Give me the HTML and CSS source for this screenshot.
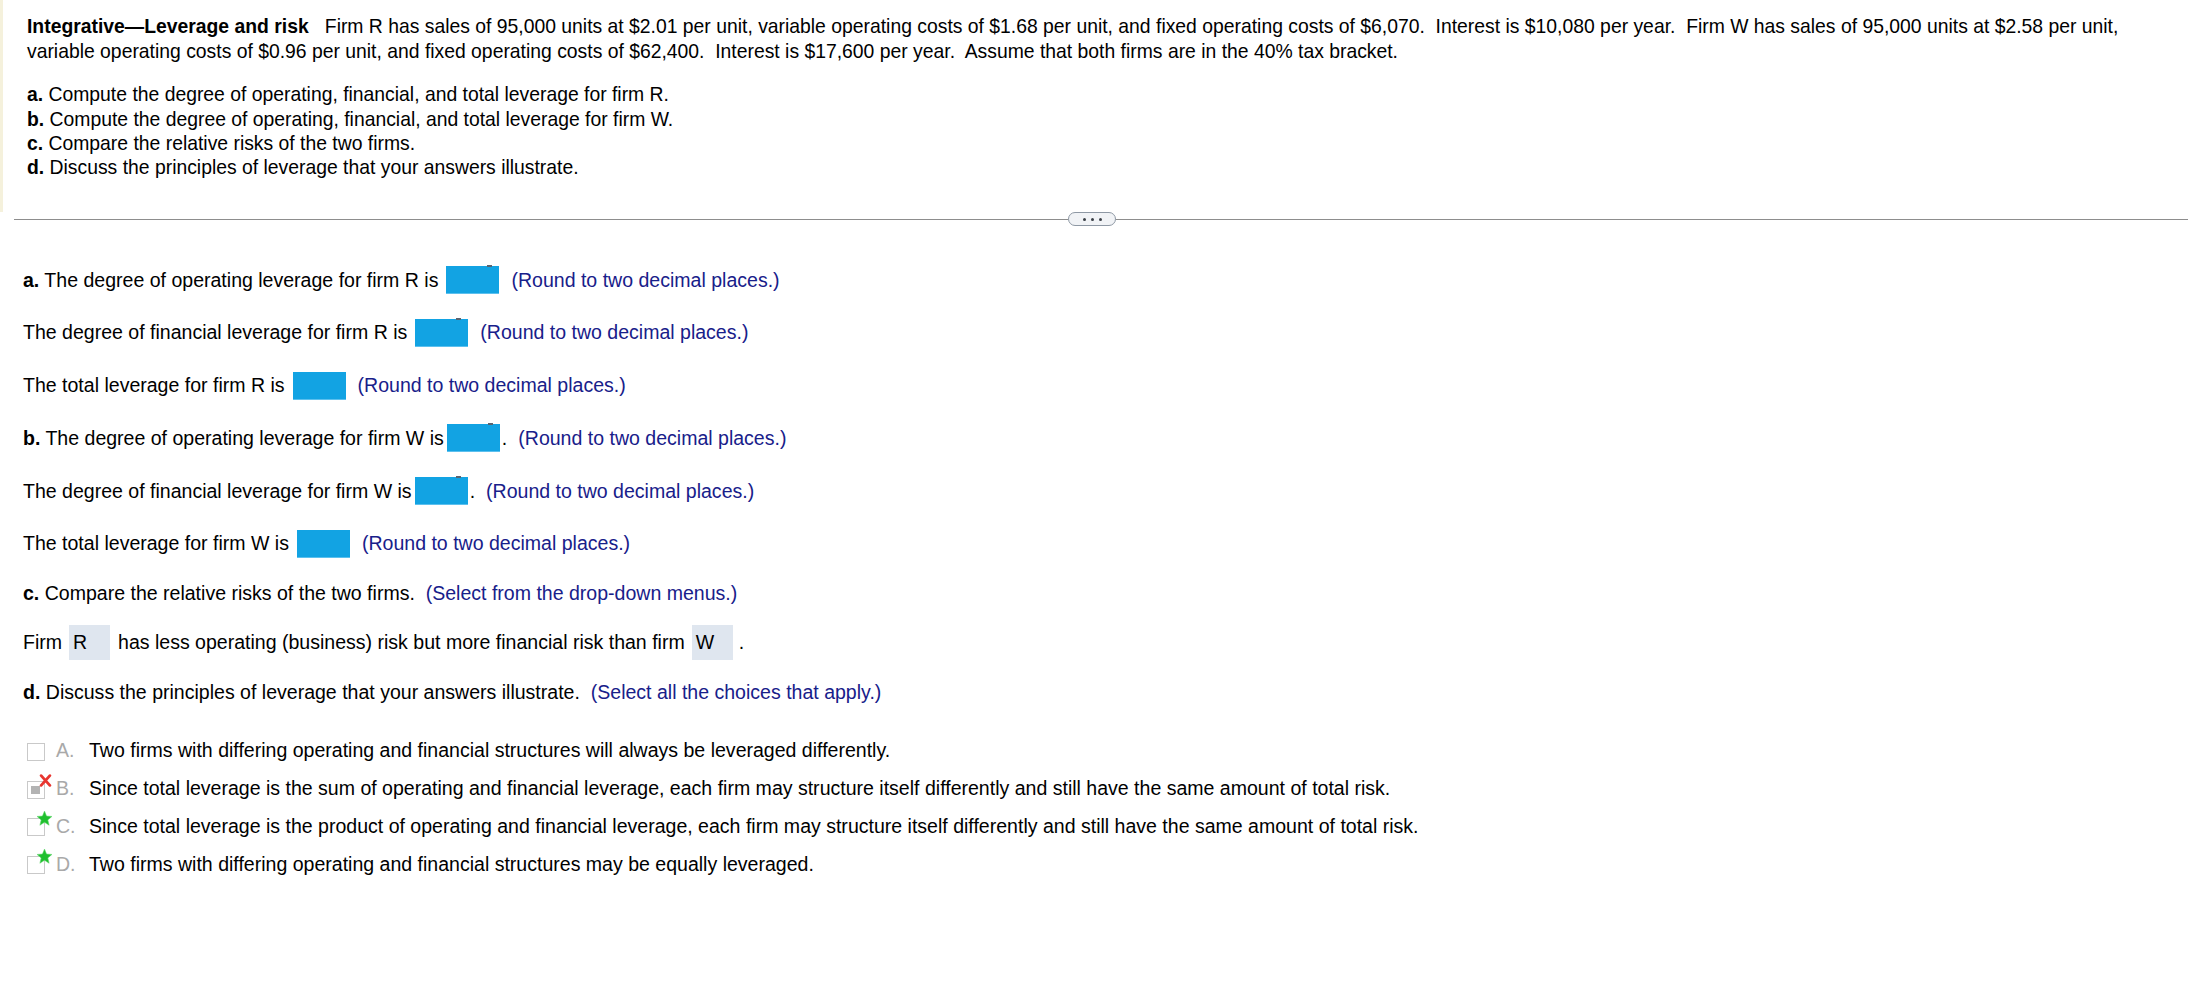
FILE: index.html
```html
<!DOCTYPE html>
<html>
<head>
<meta charset="utf-8">
<link rel="stylesheet" href="styles.css">
</head>
<body>
<div class="page">
  <div class="question">
    <p class="intro"><b>Integrative—Leverage and risk</b>&nbsp;&nbsp; Firm R has sales of 95,000 units at $2.01 per unit, variable operating costs of $1.68 per unit, and fixed operating costs of $6,070.&nbsp; Interest is $10,080 per year.&nbsp; Firm W has sales of 95,000 units at $2.58 per unit,<br>variable operating costs of $0.96 per unit, and fixed operating costs of $62,400.&nbsp; Interest is $17,600 per year.&nbsp; Assume that both firms are in the 40% tax bracket.</p>
    <ul class="parts">
      <li><b>a.</b> Compute the degree of operating, financial, and total leverage for firm R.</li>
      <li><b>b.</b> Compute the degree of operating, financial, and total leverage for firm W.</li>
      <li><b>c.</b> Compare the relative risks of the two firms.</li>
      <li><b>d.</b> Discuss the principles of leverage that your answers illustrate.</li>
    </ul>
  </div>
  <div class="divider">
    <span class="rule"></span>
    <span class="pill"><i></i><i></i><i></i></span>
    <span class="rule"></span>
  </div>
  <div class="answer">
    <div class="row"><span><b>a.</b> The degree of operating leverage for firm R is</span><span class="blank gap8"></span><span class="hint">(Round to two decimal places.)</span></div>
    <div class="row"><span>The degree of financial leverage for firm R is</span><span class="blank gap8"></span><span class="hint">(Round to two decimal places.)</span></div>
    <div class="row"><span>The total leverage for firm R is</span><span class="blank gap8 plain"></span><span class="hint">(Round to two decimal places.)</span></div>
    <div class="row"><span><b>b.</b> The degree of operating leverage for firm W is</span><span class="blank gap2"></span><span class="dot">.</span><span class="hint near">(Round to two decimal places.)</span></div>
    <div class="row"><span>The degree of financial leverage for firm W is</span><span class="blank gap2"></span><span class="dot">.</span><span class="hint near">(Round to two decimal places.)</span></div>
    <div class="row"><span>The total leverage for firm W is</span><span class="blank gap8 plain"></span><span class="hint">(Round to two decimal places.)</span></div>

    <p class="line c-line"><b>c.</b> Compare the relative risks of the two firms.&nbsp; <span class="blue">(Select from the drop-down menus.)</span></p>
    <div class="firm-row"><span>Firm</span><span class="drop">R</span><span>has less operating (business) risk but more financial risk than firm</span><span class="drop">W</span><span class="end">.</span></div>
    <p class="line d-line"><b>d.</b> Discuss the principles of leverage that your answers illustrate.&nbsp; <span class="blue">(Select all the choices that apply.)</span></p>

    <ul class="choices">
      <li class="choice"><span class="box"></span><span class="letter">A.</span><span>Two firms with differing operating and financial structures will always be leveraged differently.</span></li>
      <li class="choice"><span class="box checked"><svg class="mark" viewBox="0 0 12 12" width="13" height="13"><path d="M2 1.5 L10 10.5 M10 1.5 L2 10.5" stroke="#e8352f" stroke-width="2.6" stroke-linecap="round"/></svg></span><span class="letter">B.</span><span>Since total leverage is the sum of operating and financial leverage, each firm may structure itself differently and still have the same amount of total risk.</span></li>
      <li class="choice"><span class="box starred"><svg class="mark star" viewBox="0 0 24 24" width="17" height="17"><path d="M12 1.5 L14.9 8.6 L22.5 9.1 L16.7 14 L18.5 21.5 L12 17.4 L5.5 21.5 L7.3 14 L1.5 9.1 L9.1 8.6 Z" fill="#1fbf2e" stroke="#5fd86a" stroke-width="0.8"/></svg></span><span class="letter">C.</span><span>Since total leverage is the product of operating and financial leverage, each firm may structure itself differently and still have the same amount of total risk.</span></li>
      <li class="choice"><span class="box starred"><svg class="mark star" viewBox="0 0 24 24" width="17" height="17"><path d="M12 1.5 L14.9 8.6 L22.5 9.1 L16.7 14 L18.5 21.5 L12 17.4 L5.5 21.5 L7.3 14 L1.5 9.1 L9.1 8.6 Z" fill="#1fbf2e" stroke="#5fd86a" stroke-width="0.8"/></svg></span><span class="letter">D.</span><span>Two firms with differing operating and financial structures may be equally leveraged.</span></li>
    </ul>
  </div>
</div>
</body>
</html>
```

FILE: styles.css
```css
* { box-sizing: border-box; }
html, body { margin: 0; padding: 0; background: #fff; }
body {
  font-family: "Liberation Sans", Arial, sans-serif;
  font-size: 19.35px;
  color: #000;
}
.page { width: 2188px; }

.question {
  height: 212px;
  border-left: 3px solid #f5f1dc;
  padding: 14px 0 0 24px;
}
.intro {
  margin: 0;
  line-height: 25px;
  white-space: nowrap;
}
.parts {
  list-style: none;
  margin: 18.3px 0 0 0;
  padding: 0;
  line-height: 24.2px;
}

.divider {
  display: flex;
  align-items: center;
  height: 14px;
  margin-left: 14px;
}
.rule { height: 1px; background: #8d8d8d; }
.rule:first-child { width: 1054px; }
.rule:last-child { flex: 1; }
.pill {
  width: 48px;
  height: 14px;
  border: 1px solid #8e98a4;
  border-radius: 7px;
  background: #f1f3f6;
  display: flex;
  align-items: center;
  justify-content: center;
  gap: 5px;
}
.pill i {
  width: 3px;
  height: 3px;
  background: #3a3f46;
  border-radius: 50%;
}

.answer { padding: 40px 0 0 23px; font-size: 19.55px; }
.row {
  display: flex;
  align-items: center;
  height: 28px;
  margin-bottom: 24.8px;
  white-space: nowrap;
}
.blank {
  position: relative;
  width: 53px;
  height: 28px;
  background: #12a3e3;
  border-bottom: 1px solid #5cc0ee;
}
.blank::after {
  content: "";
  position: absolute;
  top: -1px;
  right: 7px;
  width: 5px;
  height: 2px;
  background: #5a6470;
}
.blank.plain::after { display: none; }
.gap8 { margin-left: 8px; }
.gap2 { margin-left: 3px; }
.hint { color: #18208a; margin-left: 12px; }
.dot { margin-left: 2px; }
.hint.near { margin-left: 11px; }

.line { margin: 0; line-height: 24px; white-space: nowrap; }
.blue { color: #18208a; }
.c-line { margin-top: -2px; }
.firm-row {
  display: flex;
  align-items: center;
  height: 35px;
  margin-top: 20.5px;
  white-space: nowrap;
}
.drop {
  width: 41px;
  height: 35px;
  background: #dfe6ef;
  padding-left: 4px;
  display: flex;
  align-items: center;
  margin: 0 8px 0 7px;
}
.drop + span.end { margin-left: -2px; }
.d-line { margin-top: 20px; }

.choices {
  list-style: none;
  margin: 34.5px 0 0 4px;
  padding: 0;
}
.choice {
  display: flex;
  align-items: center;
  height: 24px;
  margin-bottom: 13.8px;
  white-space: nowrap;
}
.box {
  position: relative;
  width: 18px;
  height: 18px;
  border: 1px solid #c9c9c9;
  background: #fff;
  margin-top: 2px;
}
.box.checked::before {
  content: "";
  position: absolute;
  left: 3px;
  top: 4px;
  width: 9px;
  height: 8px;
  background: #b3b3b3;
}
.mark { position: absolute; }
.box.checked .mark { right: -8px; top: -8px; }
.box.starred .mark { right: -9px; top: -9px; }
.letter {
  color: #a9a9a9;
  width: 33px;
  margin-left: 11px;
}
```
